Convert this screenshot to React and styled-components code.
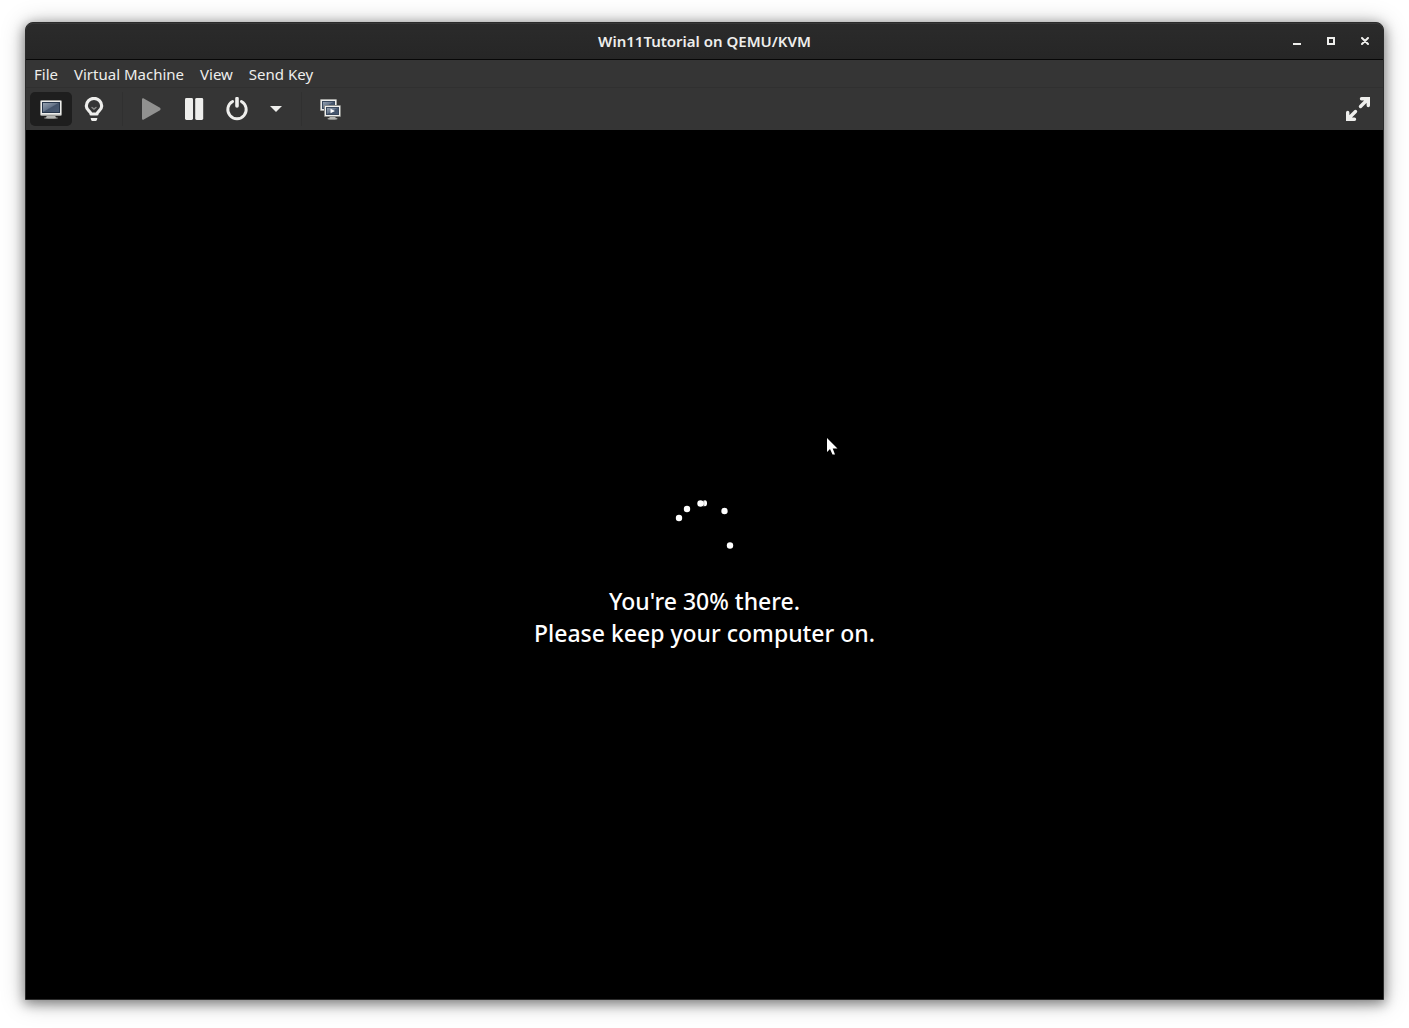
import React from "react";
import styled, { createGlobalStyle } from "styled-components";

const GlobalStyle = createGlobalStyle`
  *, *::before, *::after { box-sizing: border-box; }
  body { margin: 0; background: #ffffff; }
  button { font: inherit; color: inherit; border: 0; padding: 0; background: none; }
`;

const Desktop = styled.div`
  display: flex;
  min-height: 100vh;
  padding: 22px 25px 28px;
  font-family: "Noto Sans", "Open Sans", sans-serif;
  font-size: 15px;
  color: #eeeeec;
`;

const Window = styled.section`
  flex: 1;
  display: flex;
  flex-direction: column;
  border: 1px solid #2b2b2b;
  border-radius: 8px 8px 0 0;
  background: #353535;
  box-shadow: 0 3px 12px 1px rgba(0, 0, 0, 0.4), 0 2px 24px rgba(0, 0, 0, 0.25);
`;

const TitleBar = styled.header`
  display: grid;
  grid-template-columns: 1fr auto 1fr;
  align-items: center;
  height: 37px;
  border-bottom: 1px solid #070707;
  border-radius: 7px 7px 0 0;
  background: linear-gradient(#2b2b2b, #262626);
  box-shadow: inset 0 1px #383838;
`;

const Title = styled.h1`
  grid-column: 2;
  margin: 0;
  font-size: 15px;
  font-weight: 600;
  line-height: 20px;
`;

const WindowControls = styled.div`
  display: flex;
  justify-content: flex-end;
  gap: 10px;
  padding-right: 6px;
`;

const ControlButton = styled.button`
  display: grid;
  place-items: center;
  width: 24px;
  height: 24px;
`;

const MenuBar = styled.nav`
  display: flex;
  height: 28px;
  border-bottom: 1px solid #303030;
`;

const MenuButton = styled.button`
  padding: 0 8px;
  line-height: 28px;
`;

const Toolbar = styled.div`
  display: flex;
  align-items: center;
  gap: 1px;
  height: 42px;
  padding: 0 4px;
`;

const ToolButton = styled.button`
  display: grid;
  place-items: center;
  width: ${({ $narrow }) => ($narrow ? "35px" : "42px")};
  height: 34px;
  border-radius: 5px;
  background: ${({ $active }) => ($active ? "#1e1e1e" : "transparent")};
  color: ${({ disabled }) => (disabled ? "#919190" : "#eeeeec")};
`;

const Separator = styled.div`
  width: 1px;
  height: 34px;
  margin: 0 6px;
  background: #303030;
`;

const Spacer = styled.div`
  flex: 1;
`;

const Screen = styled.main`
  position: relative;
  flex: 1;
  display: flex;
  flex-direction: column;
  align-items: center;
  justify-content: center;
  gap: 21px;
  padding-top: 19px;
  background: #000000;
`;

const Message = styled.p`
  margin: 0;
  color: #ffffff;
  font-family: "Noto Sans", "Open Sans", sans-serif;
  font-size: 23px;
  font-weight: 500;
  line-height: 32px;
  text-align: center;
`;

const Pointer = styled.svg`
  position: absolute;
  left: calc(50% + 122px);
  top: calc(50% - 127px);
`;

const Icon = ({ children }) => (
  <svg width="24" height="24" viewBox="0 0 24 24" aria-hidden="true">
    {children}
  </svg>
);

const Gradients = () => (
  <svg width="0" height="0" style={{ position: "absolute" }} aria-hidden="true">
    <defs>
      <linearGradient id="glass" x1="0" y1="0" x2="1" y2="1">
        <stop offset="0" stopColor="#9aa5b2" />
        <stop offset="0.46" stopColor="#66758a" />
        <stop offset="0.52" stopColor="#43536a" />
        <stop offset="1" stopColor="#4a5b73" />
      </linearGradient>
    </defs>
  </svg>
);

const MonitorIcon = () => (
  <Icon>
    <ellipse cx="12" cy="21" rx="7" ry="1" fill="#8b8c89" />
    <path d="M8 18h8l1 3H7z" fill="#b5b6b3" />
    <rect x="1.5" y="3.5" width="21" height="15" rx="1" fill="#ededeb" stroke="#999a97" />
    <rect x="3.5" y="5.5" width="17" height="10" fill="url(#glass)" stroke="#27364a" />
    <path d="M2.5 17.5h19" stroke="#c9cac7" />
  </Icon>
);

const BulbIcon = () => (
  <Icon>
    <path
      d="M9 17C9 14.400 4.300 13.300 4.300 8.900a7.700 7.500 0 0 1 15.400 0c0 4.400-4.700 5.500-4.700 8.100z"
      fill="none" stroke="currentColor" strokeWidth="3.200" strokeLinejoin="round"
    />
    <path d="M9 16.500h6M9 21.500h6l-1 2.200q-2 .8-4 0z" fill="currentColor" stroke="currentColor" strokeWidth="1" />
    <path d="M10 10.500l2 1.600 2-1.600" fill="none" stroke="#8b8b89" strokeWidth="1.400" strokeLinecap="round" />
  </Icon>
);

const PlayIcon = () => (
  <Icon>
    <path d="M3 2.200v19.600q0 1.200 1.400.9L21 13.200q1.400-1.200 0-2.400L4.400 1.300Q3 1 3 2.200z" fill="currentColor" />
  </Icon>
);

const PauseIcon = () => (
  <Icon>
    <rect x="3" y="1" width="8" height="22" rx="1.400" fill="currentColor" />
    <rect x="13.200" y="1" width="8" height="22" rx="1.400" fill="currentColor" />
  </Icon>
);

const PowerIcon = () => (
  <Icon>
    <path d="M7.600 4.400a9.200 9.200 0 1 0 8.800 0" fill="none" stroke="currentColor" strokeWidth="2.900" strokeLinecap="round" />
    <path d="M12 1.600v7.400" stroke="currentColor" strokeWidth="3.600" strokeLinecap="round" />
  </Icon>
);

const ArrowIcon = () => (
  <Icon>
    <path d="M5 9h12l-6 6z" fill="currentColor" />
  </Icon>
);

const ScreensIcon = () => (
  <Icon>
    <rect x="2.500" y="2.500" width="16" height="11" rx="0.500" fill="#ededeb" stroke="#a3a4a1" />
    <rect x="4.500" y="4.500" width="12" height="7" fill="url(#glass)" stroke="#3a495d" />
    <ellipse cx="14.500" cy="21.800" rx="5" ry="1" fill="#a9aaa7" />
    <path d="M11.500 20h6v2h-6z" fill="#b5b6b3" />
    <rect x="6.500" y="8.500" width="16" height="11" rx="0.500" fill="#f0f0ee" stroke="#8b8c89" />
    <rect x="8.500" y="10.500" width="12" height="7" fill="url(#glass)" stroke="#3a495d" />
    <path d="M12.500 11.800v4.400l4.500-2.200z" fill="#ffffff" />
  </Icon>
);

const FullscreenIcon = () => (
  <Icon>
    <path
      d="M15.500 1.700h6.800v6.800M21.500 2.500l-7 7M8.500 22.300H1.700v-6.800M2.500 21.500l7-7"
      fill="none" stroke="currentColor" strokeWidth="3.400" strokeLinecap="round" strokeLinejoin="miter"
    />
  </Icon>
);

const SPINNER_DOTS = [
  [7, 18],
  [15, 9],
  [28.5, 3.5],
  [52.5, 11],
  [58, 45.5],
];

const Spinner = () => (
  <svg width="65" height="64" viewBox="0 0 65 64" role="img" aria-label="Loading">
    <ellipse cx="33" cy="3.200" rx="2" ry="3" fill="#ffffff" />
    <path d="M31.800 0v7" stroke="#777777" strokeWidth="0.600" />
    {SPINNER_DOTS.map(([x, y]) => (
      <circle key={`${x}-${y}`} cx={x} cy={y} r="3.200" fill="#ffffff" />
    ))}
  </svg>
);

const MENUS = ["File", "Virtual Machine", "View", "Send Key"];

export default function App() {
  return (
    <Desktop>
      <GlobalStyle />
      <Gradients />
      <Window>
        <TitleBar>
          <Title>Win11Tutorial on QEMU/KVM</Title>
          <WindowControls>
            <ControlButton aria-label="Minimize">
              <svg width="8" height="8"><path d="M0 7h8" stroke="#eeeeec" strokeWidth="2" /></svg>
            </ControlButton>
            <ControlButton aria-label="Maximize">
              <svg width="8" height="8"><path d="M1 1h6v6H1z" fill="none" stroke="#eeeeec" strokeWidth="2" /></svg>
            </ControlButton>
            <ControlButton aria-label="Close">
              <svg width="8" height="8"><path d="M1 1l6 6M7 1L1 7" stroke="#eeeeec" strokeWidth="2" strokeLinecap="round" /></svg>
            </ControlButton>
          </WindowControls>
        </TitleBar>
        <MenuBar>
          {MENUS.map((name) => (
            <MenuButton key={name}>{name}</MenuButton>
          ))}
        </MenuBar>
        <Toolbar role="toolbar">
          <ToolButton $active aria-label="Graphical console" aria-pressed="true"><MonitorIcon /></ToolButton>
          <ToolButton aria-label="Hardware details"><BulbIcon /></ToolButton>
          <Separator />
          <ToolButton disabled aria-label="Run"><PlayIcon /></ToolButton>
          <ToolButton aria-label="Pause"><PauseIcon /></ToolButton>
          <ToolButton aria-label="Shut down"><PowerIcon /></ToolButton>
          <ToolButton $narrow aria-label="Shutdown options"><ArrowIcon /></ToolButton>
          <Separator />
          <ToolButton aria-label="Snapshots"><ScreensIcon /></ToolButton>
          <Spacer />
          <ToolButton aria-label="Fullscreen"><FullscreenIcon /></ToolButton>
        </Toolbar>
        <Screen>
          <Spinner />
          <Message>
            You're 30% there.
            <br />
            Please keep your computer on.
          </Message>
          <Pointer width="11" height="17" viewBox="0 0 11 17" aria-hidden="true">
            <path d="M0 0v14l3-3 2.500 5.500H8L5.700 10.500H10.500z" fill="#ffffff" />
          </Pointer>
        </Screen>
      </Window>
    </Desktop>
  );
}
